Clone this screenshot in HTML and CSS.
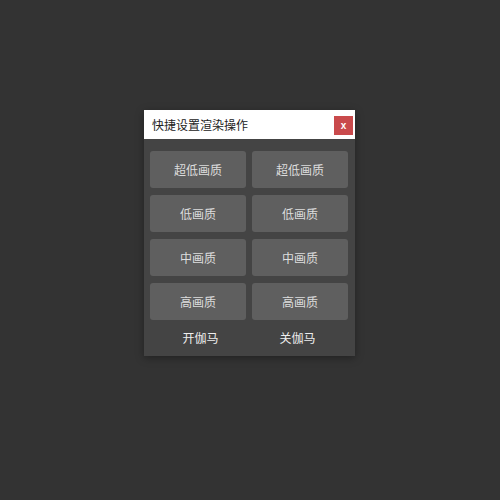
FILE: index.html
```html
<!DOCTYPE html>
<html>
<head>
<meta charset="utf-8">
<link rel="stylesheet" href="styles.css">
</head>
<body>
<div class="stage">
  <div class="panel">
    <div class="header">
      <span class="title">快捷设置渲染操作</span>
      <button class="close">x</button>
    </div>
    <div class="body">
      <div class="grid">
        <button class="btn">超低画质</button>
        <button class="btn">超低画质</button>
        <button class="btn">低画质</button>
        <button class="btn">低画质</button>
        <button class="btn">中画质</button>
        <button class="btn">中画质</button>
        <button class="btn">高画质</button>
        <button class="btn">高画质</button>
      </div>
      <div class="links">
        <span class="link">开伽马</span>
        <span class="link">关伽马</span>
      </div>
    </div>
  </div>
</div>
</body>
</html>
```
FILE: styles.css
```css
html, body {
  margin: 0;
  padding: 0;
  background: #333333;
  width: 500px;
  height: 500px;
  font-family: "Noto Sans CJK SC", "Liberation Sans", sans-serif;
}
.stage {
  padding-top: 110px;
  padding-left: 144px;
}
.panel {
  width: 211px;
  background: #444444;
  box-shadow: 0 2px 8px rgba(0,0,0,0.35);
}
.header {
  height: 29px;
  background: #ffffff;
  display: flex;
  align-items: center;
  justify-content: space-between;
  padding-left: 8px;
  padding-right: 2px;
}
.title {
  font-size: 12px;
  color: #222222;
  line-height: 1;
}
.close {
  width: 19px;
  height: 19px;
  margin-top: 1px;
  border: none;
  padding: 0;
  background: #c94a4c;
  color: #ffffff;
  font-family: "Liberation Sans", sans-serif;
  font-size: 10px;
  font-weight: bold;
  line-height: 19px;
}
.body {
  padding: 12px 7px 0 6px;
}
.grid {
  display: grid;
  grid-template-columns: 96px 96px;
  column-gap: 6px;
  row-gap: 7px;
}
.btn {
  height: 37px;
  border: none;
  border-radius: 3px;
  background: #5f5f5f;
  color: #dddddd;
  font-family: "Noto Sans CJK SC", sans-serif;
  font-size: 12px;
  padding: 0;
}
.links {
  display: grid;
  grid-template-columns: 1fr 1fr;
  padding: 0 2px 2px;
  height: 34px;
  align-items: center;
}
.link {
  text-align: center;
  color: #eeeeee;
  font-size: 12px;
}
```
